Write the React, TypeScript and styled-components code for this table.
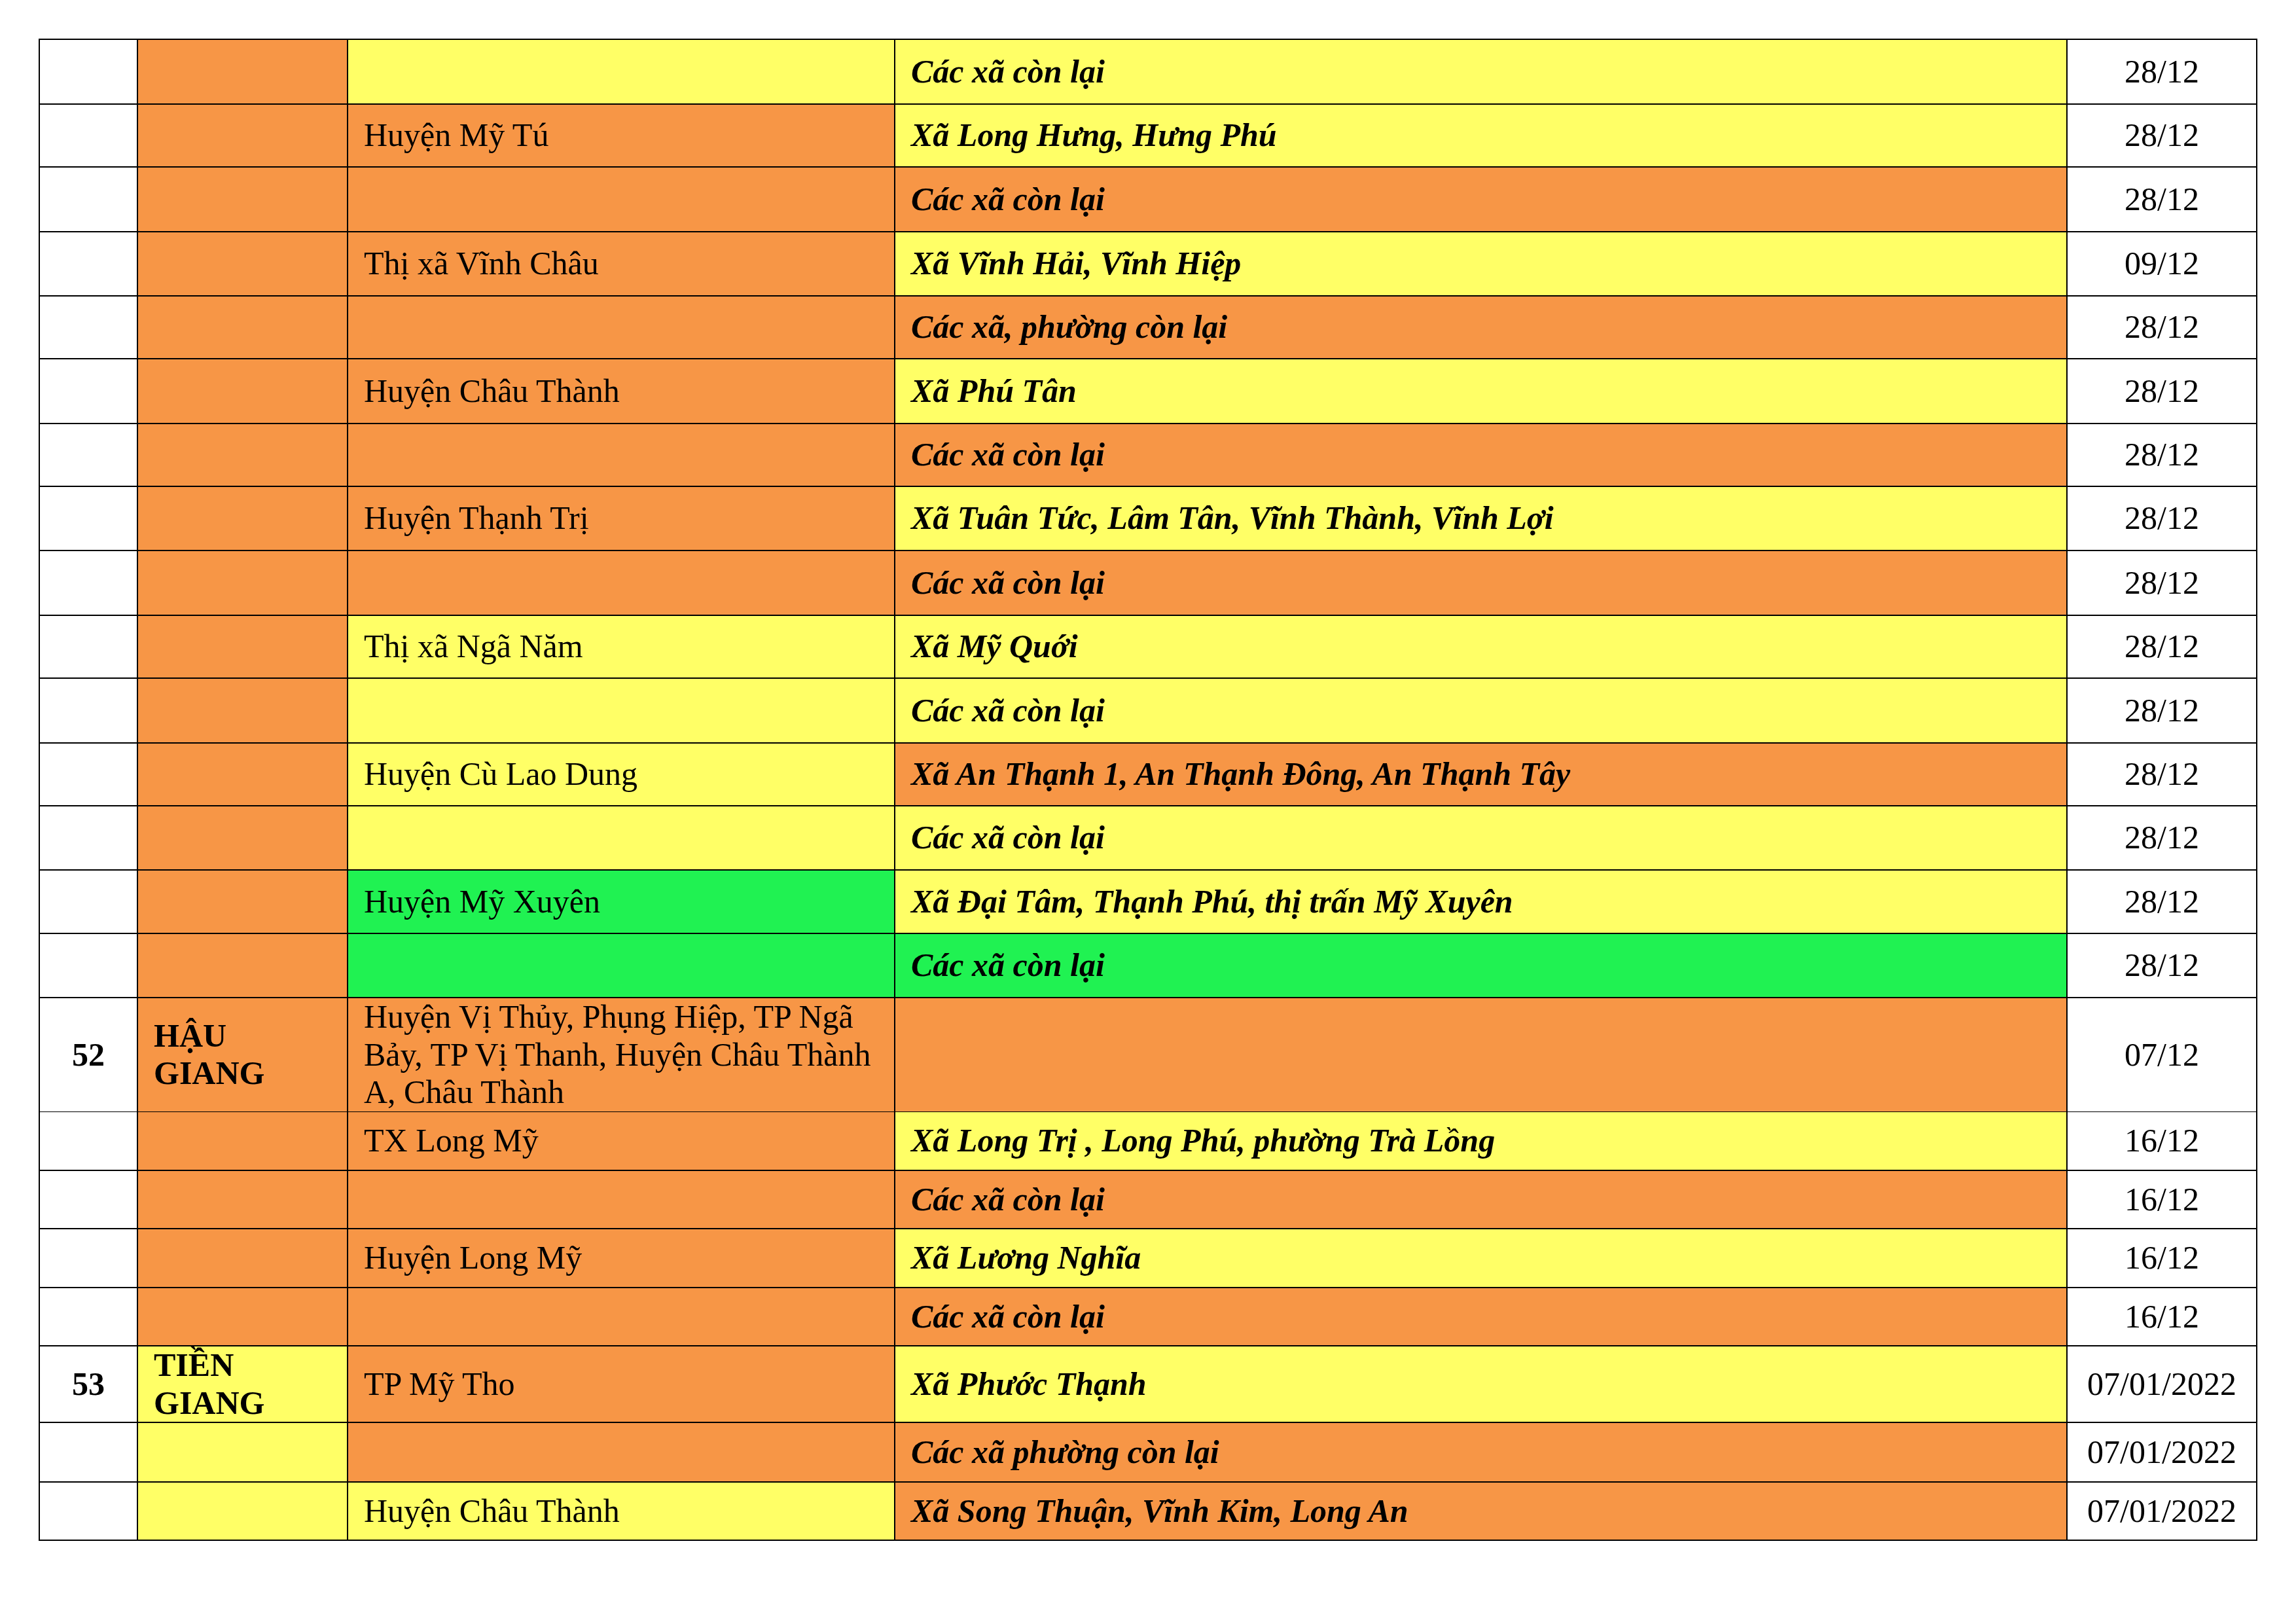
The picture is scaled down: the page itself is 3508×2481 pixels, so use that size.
import React from 'react';
import styled, { createGlobalStyle } from 'styled-components';

const ORANGE = '#F79646';
const YELLOW = '#FFFF66';
const GREEN = '#20F252';
const WHITE = '#FFFFFF';

const GlobalStyle = createGlobalStyle`
  html, body { margin: 0; padding: 0; background: #ffffff; }
  body { font-family: "Liberation Serif", "Times New Roman", serif; color: #000; }
`;

const Page = styled.div`
  width: 3508px;
  min-height: 2481px;
  box-sizing: border-box;
  padding: 59px 0 0 59px;
  background: #ffffff;
`;

const Table = styled.div`
  display: flex;
  flex-direction: column;
  width: 3390px;
  box-sizing: border-box;
  border-left: 2px solid #000;
  border-top: 2px solid #000;
`;

const Row = styled.div<{ $h: number }>`
  display: grid;
  grid-template-columns: 150px 321px 836px 1791px 290px;
  height: ${(p) => p.$h}px;
`;

const Cell = styled.div<{ $bg: string }>`
  box-sizing: border-box;
  display: flex;
  align-items: center;
  min-width: 0;
  background: ${(p) => p.$bg};
  border-right: 2px solid #000;
  border-bottom: 2px solid #000;
  font-family: "Liberation Serif", "Times New Roman", serif;
  font-size: 50px;
  line-height: 1.15;
  color: #000;
`;

const NoCell = styled(Cell)`
  justify-content: center;
  font-weight: 700;
`;

const ProvinceCell = styled(Cell)`
  padding: 0 24px 0 24px;
  font-weight: 700;
`;

const DistrictCell = styled(Cell)`
  padding: 0 10px 0 24px;
`;

const WardCell = styled(Cell)`
  padding: 0 10px 0 24px;
  font-weight: 700;
  font-style: italic;
`;

const DateCell = styled(Cell)`
  justify-content: center;
`;

type RowData = {
  h: number;
  no?: string;
  prov?: string;
  provBg: string;
  dist?: string;
  distBg: string;
  ward?: string;
  wardBg: string;
  date: string;
};

const O = ORANGE;
const Y = YELLOW;
const G = GREEN;

const rows: RowData[] = [
  { h: 99, provBg: O, distBg: Y, ward: 'Các xã còn lại', wardBg: Y, date: '28/12' },
  { h: 96, provBg: O, dist: 'Huyện Mỹ Tú', distBg: O, ward: 'Xã Long Hưng, Hưng Phú', wardBg: Y, date: '28/12' },
  { h: 99, provBg: O, distBg: O, ward: 'Các xã còn lại', wardBg: O, date: '28/12' },
  { h: 98, provBg: O, dist: 'Thị xã Vĩnh Châu', distBg: O, ward: 'Xã Vĩnh Hải, Vĩnh Hiệp', wardBg: Y, date: '09/12' },
  { h: 96, provBg: O, distBg: O, ward: 'Các xã, phường còn lại', wardBg: O, date: '28/12' },
  { h: 99, provBg: O, dist: 'Huyện Châu Thành', distBg: O, ward: 'Xã Phú Tân', wardBg: Y, date: '28/12' },
  { h: 96, provBg: O, distBg: O, ward: 'Các xã còn lại', wardBg: O, date: '28/12' },
  { h: 98, provBg: O, dist: 'Huyện Thạnh Trị', distBg: O, ward: 'Xã Tuân Tức, Lâm Tân, Vĩnh Thành, Vĩnh Lợi', wardBg: Y, date: '28/12' },
  { h: 99, provBg: O, distBg: O, ward: 'Các xã còn lại', wardBg: O, date: '28/12' },
  { h: 96, provBg: O, dist: 'Thị xã Ngã Năm', distBg: Y, ward: 'Xã Mỹ Quới', wardBg: Y, date: '28/12' },
  { h: 99, provBg: O, distBg: Y, ward: 'Các xã còn lại', wardBg: Y, date: '28/12' },
  { h: 96, provBg: O, dist: 'Huyện Cù Lao Dung', distBg: Y, ward: 'Xã An Thạnh 1, An Thạnh Đông, An Thạnh Tây', wardBg: O, date: '28/12' },
  { h: 98, provBg: O, distBg: Y, ward: 'Các xã còn lại', wardBg: Y, date: '28/12' },
  { h: 97, provBg: O, dist: 'Huyện Mỹ Xuyên', distBg: G, ward: 'Xã Đại Tâm, Thạnh Phú, thị trấn Mỹ Xuyên', wardBg: Y, date: '28/12' },
  { h: 98, provBg: O, distBg: G, ward: 'Các xã còn lại', wardBg: G, date: '28/12' },
  {
    h: 174,
    no: '52',
    prov: 'HẬU GIANG',
    provBg: O,
    dist: 'Huyện Vị Thủy, Phụng Hiệp, TP Ngã Bảy, TP Vị Thanh, Huyện Châu Thành A, Châu Thành',
    distBg: O,
    wardBg: O,
    date: '07/12',
  },
  { h: 90, provBg: O, dist: 'TX Long Mỹ', distBg: O, ward: 'Xã Long Trị , Long Phú, phường Trà Lồng', wardBg: Y, date: '16/12' },
  { h: 89, provBg: O, distBg: O, ward: 'Các xã còn lại', wardBg: O, date: '16/12' },
  { h: 90, provBg: O, dist: 'Huyện Long Mỹ', distBg: O, ward: 'Xã Lương Nghĩa', wardBg: Y, date: '16/12' },
  { h: 89, provBg: O, distBg: O, ward: 'Các xã còn lại', wardBg: O, date: '16/12' },
  { h: 117, no: '53', prov: 'TIỀN GIANG', provBg: Y, dist: 'TP Mỹ Tho', distBg: O, ward: 'Xã Phước Thạnh', wardBg: Y, date: '07/01/2022' },
  { h: 91, provBg: Y, distBg: O, ward: 'Các xã phường còn lại', wardBg: O, date: '07/01/2022' },
  { h: 89, provBg: Y, dist: 'Huyện Châu Thành', distBg: Y, ward: 'Xã Song Thuận, Vĩnh Kim, Long An', wardBg: O, date: '07/01/2022' },
];

export default function App() {
  return (
    <>
      <GlobalStyle />
      <Page>
        <Table>
          {rows.map((r, i) => (
            <Row key={i} $h={r.h}>
              <NoCell $bg={WHITE}>{r.no ?? ''}</NoCell>
              <ProvinceCell $bg={r.provBg}>{r.prov ?? ''}</ProvinceCell>
              <DistrictCell $bg={r.distBg}>{r.dist ?? ''}</DistrictCell>
              <WardCell $bg={r.wardBg}>{r.ward ?? ''}</WardCell>
              <DateCell $bg={WHITE}>{r.date}</DateCell>
            </Row>
          ))}
        </Table>
      </Page>
    </>
  );
}
